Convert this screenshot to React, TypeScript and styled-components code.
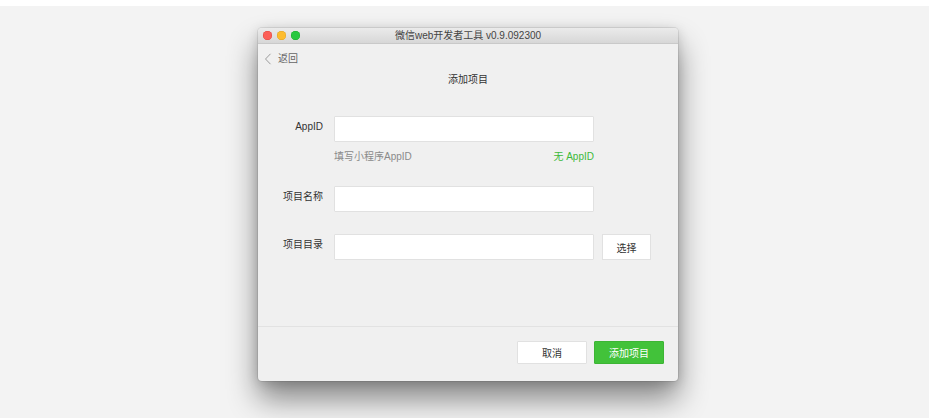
import styled, { createGlobalStyle } from 'styled-components';

const GlobalStyle = createGlobalStyle`
  html, body {
    margin: 0;
    padding: 0;
    background: #ffffff;
    font-family: "Liberation Sans", "Noto Sans CJK SC", sans-serif;
  }
`;

const fields = [
  { label: 'AppID', hint: '填写小程序AppID', action: '无 AppID' },
  { label: '项目名称' },
  { label: '项目目录', button: '选择' },
];

export default function App() {
  return (
    <>
      <GlobalStyle />
      <Stage>
        <Window>
          <TitleBar>
            <Lights>
              <Light color="#fc5f57" edge="#e0443e" />
              <Light color="#fdbc2e" edge="#dea123" />
              <Light color="#28c840" edge="#1aab29" />
            </Lights>
            <WindowTitle>微信web开发者工具 v0.9.092300</WindowTitle>
          </TitleBar>
          <Body>
            <BackLink>
              <svg width="8" height="12" viewBox="0 0 8 12">
                <polyline points="6.5,0.8 1.5,6 6.5,11.2" fill="none" stroke="#9a9a9a" strokeWidth="1" />
              </svg>
              返回
            </BackLink>
            <PageTitle>添加项目</PageTitle>
            <Form>
              {fields.map((f) => (
                <Field key={f.label}>
                  <Label>{f.label}</Label>
                  <Control>
                    <InputRow>
                      <Input />
                      {f.button && <SideButton>{f.button}</SideButton>}
                    </InputRow>
                    {f.hint && (
                      <HintRow>
                        <span>{f.hint}</span>
                        <GreenLink>{f.action}</GreenLink>
                      </HintRow>
                    )}
                  </Control>
                </Field>
              ))}
            </Form>
          </Body>
          <Footer>
            <Button>取消</Button>
            <Button primary>添加项目</Button>
          </Footer>
        </Window>
      </Stage>
    </>
  );
}

const Stage = styled.div`
  margin-top: 6px;
  height: 412px;
  background: #f3f3f3;
  display: flex;
  justify-content: center;
  align-items: flex-start;
  padding: 22px 0 0 7px;
  box-sizing: border-box;
`;

const Window = styled.div`
  width: 420px;
  height: 353px;
  background: #f0f0f0;
  border-radius: 4px;
  display: flex;
  flex-direction: column;
  box-shadow: 0 0 0 1px rgba(0, 0, 0, 0.08), 0 18px 30px rgba(0, 0, 0, 0.45), 0 2px 12px rgba(0, 0, 0, 0.15);
  overflow: hidden;
`;

const TitleBar = styled.div`
  height: 16px;
  flex: none;
  position: relative;
  display: flex;
  align-items: center;
  justify-content: center;
  background: linear-gradient(#ebebeb, #d7d7d7);
  border-bottom: 1px solid #c9c9c9;
  box-sizing: border-box;
`;

const Lights = styled.div`
  position: absolute;
  left: 5px;
  top: 3px;
  display: flex;
  gap: 5px;
`;

const Light = styled.span<{ color: string; edge: string }>`
  width: 9px;
  height: 9px;
  border-radius: 50%;
  background: ${(p) => p.color};
  box-shadow: inset 0 0 0 0.5px ${(p) => p.edge};
`;

const WindowTitle = styled.div`
  font-size: 10px;
  color: #444444;
  line-height: 16px;
`;

const Body = styled.div`
  flex: 1;
  display: flex;
  flex-direction: column;
`;

const BackLink = styled.div`
  display: flex;
  align-items: center;
  gap: 6px;
  margin: 8px 0 0 6px;
  font-size: 10px;
  line-height: 14px;
  color: #666666;
`;

const PageTitle = styled.div`
  margin-top: 7px;
  text-align: center;
  font-size: 10px;
  line-height: 14px;
  color: #333333;
`;

const Form = styled.div`
  margin-top: 29px;
  display: flex;
  flex-direction: column;
  gap: 22px;
`;

const Field = styled.div`
  display: grid;
  grid-template-columns: 65px auto;
  column-gap: 11px;
  align-items: start;
`;

const Label = styled.div`
  text-align: right;
  font-size: 10px;
  line-height: 14px;
  padding-top: 4px;
  color: #333333;
`;

const Control = styled.div`
  display: flex;
  flex-direction: column;
`;

const InputRow = styled.div`
  display: flex;
  gap: 8px;
`;

const Input = styled.div`
  width: 260px;
  height: 26px;
  box-sizing: border-box;
  background: #ffffff;
  border: 1px solid #e1e1e1;
  border-radius: 1px;
`;

const SideButton = styled.div`
  width: 49px;
  height: 26px;
  box-sizing: border-box;
  background: #ffffff;
  border: 1px solid #e1e1e1;
  display: flex;
  align-items: center;
  justify-content: center;
  font-size: 10px;
  color: #333333;
`;

const HintRow = styled.div`
  width: 260px;
  margin-top: 8px;
  display: flex;
  justify-content: space-between;
  font-size: 10px;
  line-height: 14px;
  color: #8a8a8a;
`;

const GreenLink = styled.span`
  color: #3cb93a;
`;

const Footer = styled.div`
  height: 55px;
  flex: none;
  box-sizing: border-box;
  border-top: 1px solid #e2e2e2;
  display: flex;
  justify-content: flex-end;
  align-items: flex-start;
  gap: 7px;
  padding: 14px 14px 0 0;
`;

const Button = styled.div<{ primary?: boolean }>`
  width: 70px;
  height: 23px;
  box-sizing: border-box;
  display: flex;
  align-items: center;
  justify-content: center;
  font-size: 10px;
  border-radius: 1px;
  background: ${(p) => (p.primary ? '#42c23a' : '#ffffff')};
  border: 1px solid ${(p) => (p.primary ? '#3db535' : '#e1e1e1')};
  color: ${(p) => (p.primary ? '#ffffff' : '#333333')};
`;
